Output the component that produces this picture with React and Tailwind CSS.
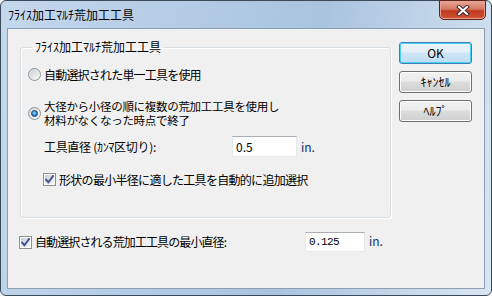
import React from "react";

const jp = { fontFamily: '"Noto Sans CJK JP", "Noto Sans", sans-serif' };

function Radio({ checked }) {
  return (
    <div className="w-[13px] h-[13px] shrink-0 rounded-full border border-[#8d9399] bg-[linear-gradient(135deg,#d6d8db,#f8f8f8)] flex items-center justify-center">
      {checked ? (
        <div className="w-[7px] h-[7px] rounded-full border border-[#1f3f72] bg-[radial-gradient(circle_at_45%_40%,#a6e0fb_0%,#3d8fd8_45%,#1a4f98_100%)]" />
      ) : (
        <div className="w-[9px] h-[9px] rounded-full bg-[linear-gradient(135deg,#cfd2d6,#f4f4f4)]" />
      )}
    </div>
  );
}

function Checkbox() {
  return (
    <div className="w-[13px] h-[13px] shrink-0 border border-[#8e8f8f] bg-white p-[1px]">
      <div className="w-full h-full bg-[linear-gradient(135deg,#c9ced6,#f5f6f7)] flex items-center justify-center">
        <svg width="9" height="9" viewBox="0 0 9 9">
          <path d="M1 4.5 L3.4 7.2 L8 1" fill="none" stroke="#3b4d8e" strokeWidth="1.8" strokeLinecap="square" />
        </svg>
      </div>
    </div>
  );
}

function Button({ children, primary }) {
  return (
    <div
      className={
        "h-[22px] w-[73px] rounded-[3px] border flex items-center justify-center text-[12px] leading-[12px] text-black " +
        (primary
          ? "border-[#3c7fb1] shadow-[inset_0_0_0_1px_#48d0f8] bg-[linear-gradient(#ebf4fb_0%,#e4f0fa_45%,#cfe6f7_50%,#bcdcf3_100%)]"
          : "border-[#707070] shadow-[inset_0_0_0_1px_#fcfcfc] bg-[linear-gradient(#f2f2f2_0%,#ebebeb_45%,#dddddd_50%,#cfcfcf_100%)]")
      }
    >
      {children}
    </div>
  );
}

export default function App() {
  return (
    <div className="w-[492px] h-[296px] bg-white" style={jp}>
      <div className="w-full h-full rounded-[6px] border border-[#3b4a5a] bg-[linear-gradient(100deg,#c4d8ed_0%,#b3cbe5_35%,#a9c3df_60%,#d9e6f3_100%)] flex flex-col px-[6px] pb-[6px]">
        <div className="h-[27px] flex justify-between">
          <div className="pl-[1px] pt-[8px] text-[12px] leading-[12px] text-black">ﾌﾗｲｽ加工ﾏﾙﾁ荒加工工具</div>
          <div className="mt-[-1px] mr-[-1px] w-[47px] h-[20px] rounded-b-[5px] border border-[#5a2519] bg-[linear-gradient(#e4a899_0%,#d57762_45%,#c0391f_55%,#cf5538_100%)] shadow-[inset_0_0_0_1px_#e8a18f] flex items-center justify-center">
            <svg width="14" height="11" viewBox="0 0 14 11">
              <path d="M3 2 L11 9 M11 2 L3 9" stroke="#3a2a2a" strokeWidth="4" strokeLinecap="square" />
              <path d="M3 2 L11 9 M11 2 L3 9" stroke="#ffffff" strokeWidth="2" strokeLinecap="square" />
            </svg>
          </div>
        </div>
        <div className="flex-1 border border-[#8b9fb5] bg-[#f0f0f0] flex flex-col pl-[11px] pt-[12px] text-[12px] leading-[12px] text-black">
          <div className="flex items-start">
            <fieldset className="ml-[1px] w-[371px] h-[177px] border border-[#d5dfe5] rounded-[3px] shadow-[inset_1px_1px_0_#fff,1px_1px_0_#fff] pl-[7px]">
              <legend className="ml-[4px] px-[3px] leading-[12px]">ﾌﾗｲｽ加工ﾏﾙﾁ荒加工工具</legend>
              <div className="flex items-center h-[13px] mt-[15px]">
                <Radio />
                <span className="ml-[3px] tracking-[-0.8px]">自動選択された単一工具を使用</span>
              </div>
              <div className="flex items-center mt-[18px]">
                <Radio checked />
                <div className="ml-[3px] text-[11.5px] tracking-[-0.3px] leading-[14px]">
                  <div>大径から小径の順に複数の荒加工工具を使用し</div>
                  <div>材料がなくなった時点で終了</div>
                </div>
              </div>
              <div className="flex items-center h-[21px] mt-[9px] pl-[16px]">
                <span className="w-[188px] tracking-[-0.3px]">工具直径 (ｶﾝﾏ区切り):</span>
                <div className="w-[65px] h-[21px] bg-white border border-[#e3e9ef] border-t-[#abadb3] flex items-center pl-[3px]">0.5</div>
                <span className="ml-[4px] text-[#14306a]">in.</span>
              </div>
              <div className="flex items-center h-[13px] mt-[16px] pl-[15px]">
                <Checkbox />
                <span className="ml-[3px] tracking-[-0.7px]">形状の最小半径に適した工具を自動的に追加選択</span>
              </div>
            </fieldset>
            <div className="ml-[8px] mt-[1px] flex flex-col gap-[7px]">
              <Button primary>OK</Button>
              <Button>ｷｬﾝｾﾙ</Button>
              <Button>ﾍﾙﾌﾟ</Button>
            </div>
          </div>
          <div className="flex items-center h-[20px] mt-[14px]">
            <Checkbox />
            <span className="ml-[3px] w-[270px] tracking-[-0.9px]">自動選択される荒加工工具の最小直径:</span>
            <div className="w-[60px] h-[20px] bg-white border border-[#e3e9ef] border-t-[#abadb3] flex items-center pl-[3px] text-[11px] tracking-[-0.6px]" style={{ fontFamily: '"Liberation Mono", monospace' }}>
              0.125
            </div>
            <span className="ml-[4px] mb-[3px] text-[#14306a]">in.</span>
          </div>
        </div>
      </div>
    </div>
  );
}
